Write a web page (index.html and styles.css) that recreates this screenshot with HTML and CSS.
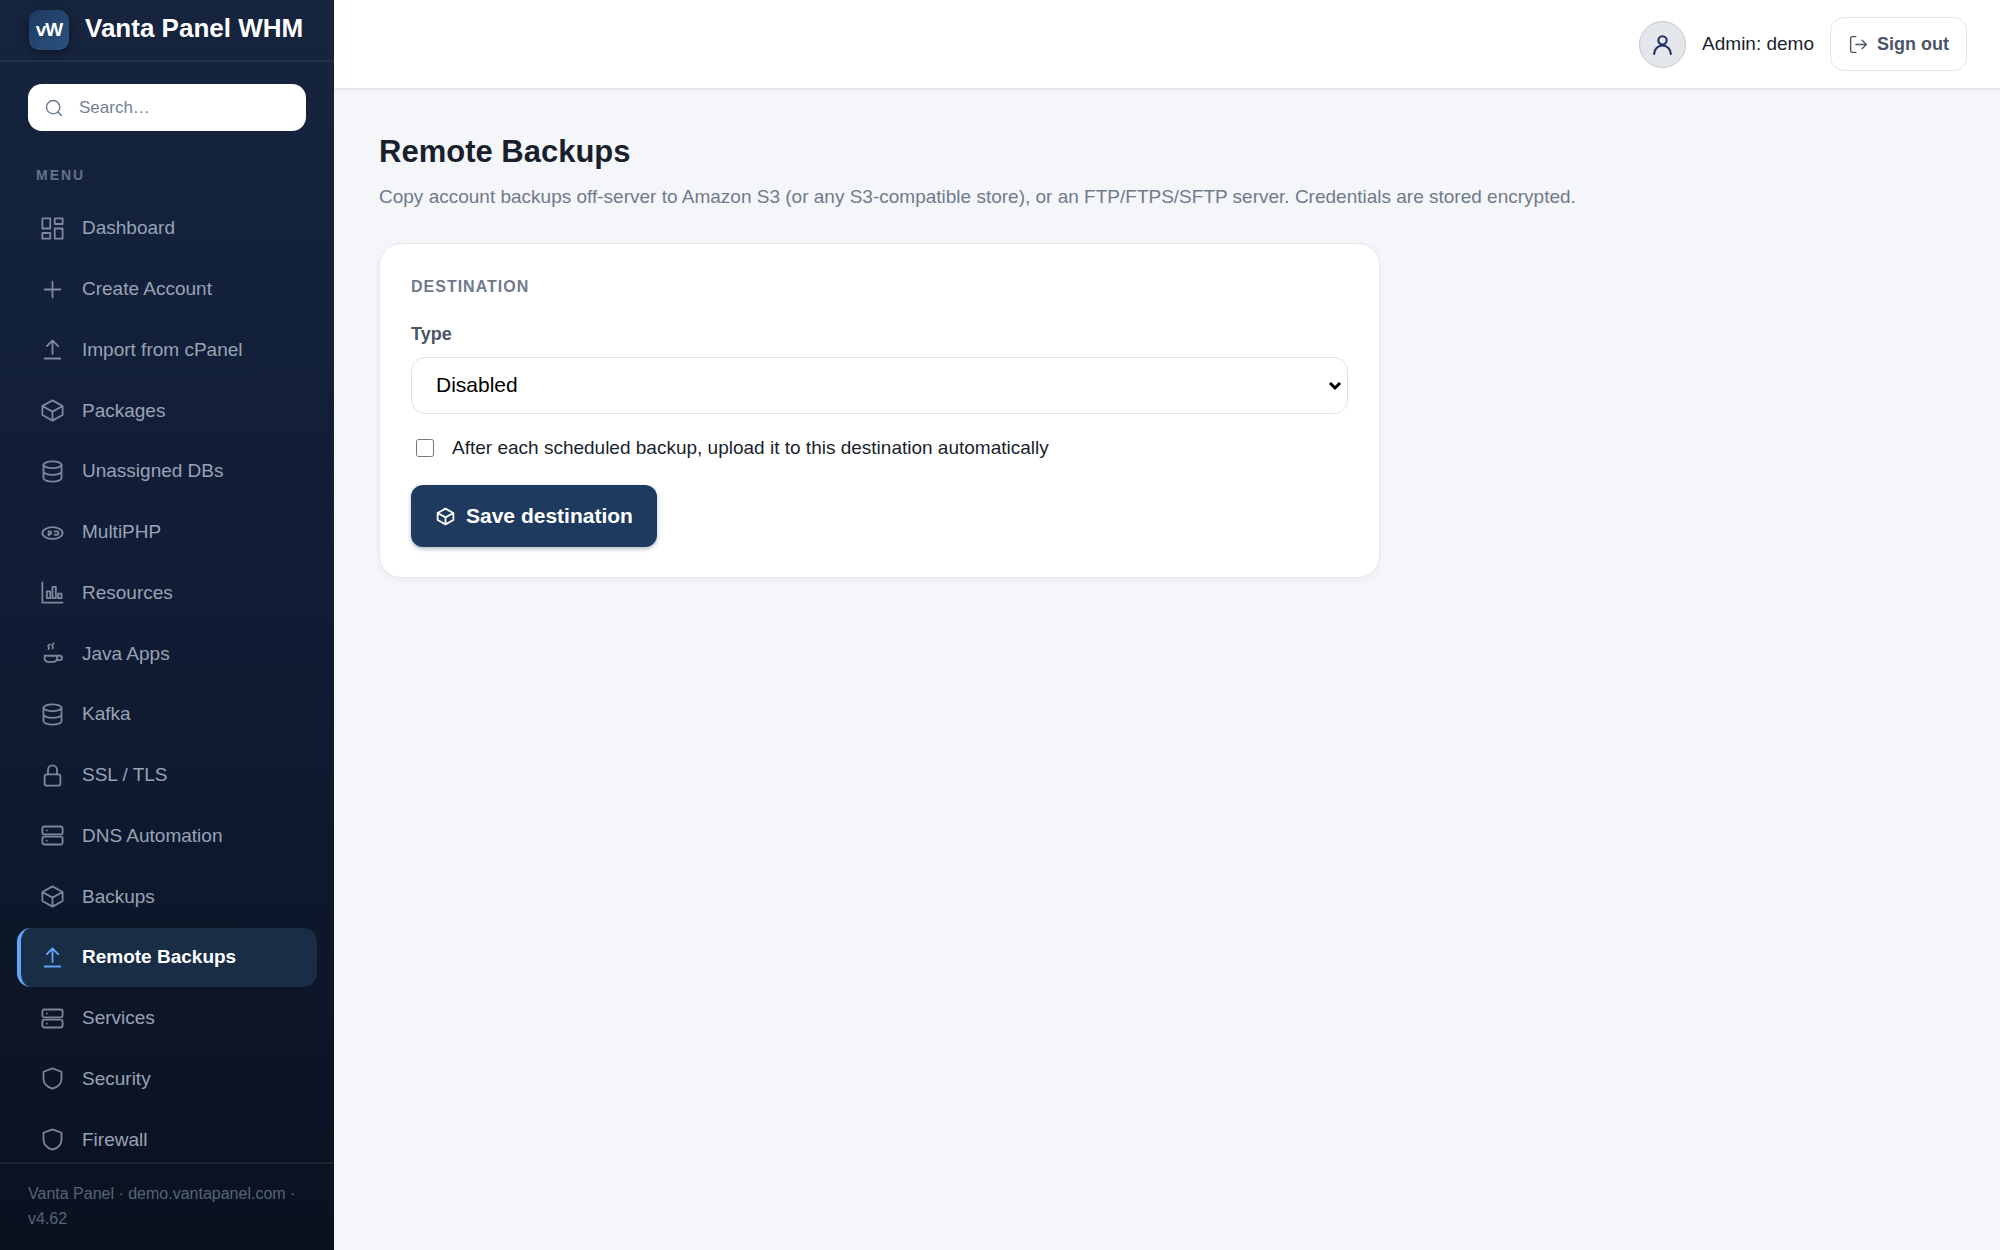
FILE: index.html
```html
<!DOCTYPE html>
<html lang="en">
<head>
    <meta charset="UTF-8">
    <meta name="viewport" content="width=device-width, initial-scale=1.0">
    <title>Remote Backups - Vanta Panel WHM</title>
    <link rel="stylesheet" href="styles.css">
</head>
<body>
    <!-- icon sprite -->
    <svg class="sprite" aria-hidden="true">
        <symbol id="i-search" viewBox="0 0 24 24"><circle cx="11" cy="11" r="8"/><path d="M21 21l-4.3-4.3"/></symbol>
        <symbol id="i-dashboard" viewBox="0 0 24 24"><path d="M3 3h7v9H3zM14 3h7v5h-7zM14 12h7v9h-7zM3 16h7v5H3z"/></symbol>
        <symbol id="i-plus" viewBox="0 0 24 24"><path d="M12 5v14M5 12h14"/></symbol>
        <symbol id="i-upload" viewBox="0 0 24 24"><path d="M12 16V4M7 9l5-5 5 5M5 20h14"/></symbol>
        <symbol id="i-box" viewBox="0 0 24 24"><path d="M12 3l9 5v8l-9 5-9-5V8zM3 8l9 5 9-5M12 13v8"/></symbol>
        <symbol id="i-db" viewBox="0 0 24 24"><ellipse cx="12" cy="6" rx="8" ry="3"/><path d="M4 6v12c0 1.700 3.600 3 8 3s8-1.300 8-3V6M4 12c0 1.700 3.600 3 8 3s8-1.300 8-3"/></symbol>
        <symbol id="i-php" viewBox="0 0 24 24"><ellipse cx="12" cy="12.500" rx="9" ry="5.200"/><path d="M8.500 14.500v-3.500h1a1.400 1.400 0 0 1 0 2.800h-1M13.800 11h2a1.500 1.500 0 0 1 0 3h-2"/></symbol>
        <symbol id="i-chart" viewBox="0 0 24 24"><path d="M3 3v18h18M7 11h3v6H7zM12 7h3v10h-3zM17 13h3v4h-3z"/></symbol>
        <symbol id="i-java" viewBox="0 0 24 24"><path d="M5 14h11v2.500a3 3 0 0 1-3 3H8a3 3 0 0 1-3-3zM16 14h2.500a1.800 1.800 0 0 1 0 3.800H16M9.500 4c-1.500 1-1.500 1.500-1 2.200s.5 1.300 0 1.800M13 3c-1.500 1-1.500 1.700-1 2.500s.5 1.300 0 2"/></symbol>
        <symbol id="i-lock" viewBox="0 0 24 24"><rect x="5" y="11" width="14" height="10" rx="2"/><path d="M8 11V7a4 4 0 0 1 8 0v4"/></symbol>
        <symbol id="i-server" viewBox="0 0 24 24"><rect x="3" y="4" width="18" height="7" rx="2"/><rect x="3" y="13" width="18" height="7" rx="2"/><path d="M7 7.500h.01M7 16.500h.01"/></symbol>
        <symbol id="i-shield" viewBox="0 0 24 24"><path d="M12 3l8 3v6c0 4.500-3.200 7.700-8 9-4.800-1.300-8-4.500-8-9V6z"/></symbol>
        <symbol id="i-user" viewBox="0 0 24 24"><circle cx="12" cy="8" r="4"/><path d="M4 21a8 8 0 0 1 16 0"/></symbol>
        <symbol id="i-logout" viewBox="0 0 24 24"><path d="M9 21H5a2 2 0 0 1-2-2V5a2 2 0 0 1 2-2h4M16 17l5-5-5-5M21 12H9"/></symbol>
    </svg>

    <div class="layout">
        <aside class="sidebar">
            <div class="brand">
                <span class="brand-logo">vW</span>
                <span class="brand-name">Vanta Panel WHM</span>
            </div>

            <div class="search">
                <svg class="icon"><use href="#i-search"/></svg>
                <input type="search" placeholder="Search…" aria-label="Search">
            </div>

            <div class="menu-label">Menu</div>
            <nav class="menu">
                <a href="#"><svg class="icon"><use href="#i-dashboard"/></svg>Dashboard</a>
                <a href="#"><svg class="icon"><use href="#i-plus"/></svg>Create Account</a>
                <a href="#"><svg class="icon"><use href="#i-upload"/></svg>Import from cPanel</a>
                <a href="#"><svg class="icon"><use href="#i-box"/></svg>Packages</a>
                <a href="#"><svg class="icon"><use href="#i-db"/></svg>Unassigned DBs</a>
                <a href="#"><svg class="icon"><use href="#i-php"/></svg>MultiPHP</a>
                <a href="#"><svg class="icon"><use href="#i-chart"/></svg>Resources</a>
                <a href="#"><svg class="icon"><use href="#i-java"/></svg>Java Apps</a>
                <a href="#"><svg class="icon"><use href="#i-db"/></svg>Kafka</a>
                <a href="#"><svg class="icon"><use href="#i-lock"/></svg>SSL / TLS</a>
                <a href="#"><svg class="icon"><use href="#i-server"/></svg>DNS Automation</a>
                <a href="#"><svg class="icon"><use href="#i-box"/></svg>Backups</a>
                <a href="#" class="active" aria-current="page"><svg class="icon"><use href="#i-upload"/></svg>Remote Backups</a>
                <a href="#"><svg class="icon"><use href="#i-server"/></svg>Services</a>
                <a href="#"><svg class="icon"><use href="#i-shield"/></svg>Security</a>
                <a href="#"><svg class="icon"><use href="#i-shield"/></svg>Firewall</a>
            </nav>

            <div class="sidebar-footer">Vanta Panel · demo.vantapanel.com · v4.62</div>
        </aside>

        <div class="main">
            <header class="topbar">
                <span class="avatar"><svg class="icon"><use href="#i-user"/></svg></span>
                <span class="admin-name">Admin: demo</span>
                <button type="button" class="btn-signout"><svg class="icon"><use href="#i-logout"/></svg>Sign out</button>
            </header>

            <main class="content">
                <h1>Remote Backups</h1>
                <p class="subtitle">Copy account backups off-server to Amazon S3 (or any S3-compatible store), or an FTP/FTPS/SFTP server. Credentials are stored encrypted.</p>

                <form class="card">
                    <h2>Destination</h2>
                    <label class="field-label" for="type">Type</label>
                    <select id="type">
                        <option>Disabled</option>
                        <option>Amazon S3 / S3-compatible</option>
                        <option>FTP / FTPS</option>
                        <option>SFTP</option>
                    </select>
                    <label class="check">
                        <input type="checkbox">
                        After each scheduled backup, upload it to this destination automatically
                    </label>
                    <button type="button" class="btn-primary"><svg class="icon"><use href="#i-box"/></svg>Save destination</button>
                </form>
            </main>
        </div>
    </div>
</body>
</html>
```
FILE: styles.css
```css
* {
    box-sizing: border-box;
}
body {
    margin: 0;
    font-family: "Liberation Sans", Arial, sans-serif;
    font-size: 19px;
    color: #1a1f2e;
    background: #f4f6fa;
}
button, input, select {
    font-family: inherit;
}
.sprite {
    display: none;
}
.icon {
    width: 27px;
    height: 27px;
    flex-shrink: 0;
    fill: none;
    stroke: currentColor;
    stroke-width: 1.6;
    stroke-linecap: round;
    stroke-linejoin: round;
}
.layout {
    display: flex;
    height: 100vh;
}

/* sidebar */
.sidebar {
    width: 334px;
    flex-shrink: 0;
    display: flex;
    flex-direction: column;
    background: linear-gradient(180deg, #16243e 0%, #111d36 45%, #0a1220 100%);
}
.brand {
    display: flex;
    align-items: center;
    gap: 16px;
    padding: 10px 29px;
    border-bottom: 2px solid #22304a;
}
.brand-logo {
    width: 40px;
    height: 40px;
    border-radius: 10px;
    background: linear-gradient(135deg, #1e3a5f, #2c5282);
    box-shadow: 0 3px 10px rgba(0, 0, 0, 0.35);
    color: #fff;
    font-size: 19px;
    font-weight: bold;
    line-height: 40px;
    text-align: center;
    letter-spacing: -1px;
}
.brand-name {
    padding-bottom: 4px;
    color: #fff;
    font-size: 26px;
    font-weight: bold;
    line-height: 36px;
    white-space: nowrap;
}
.search {
    display: flex;
    align-items: center;
    gap: 15px;
    height: 47px;
    margin: 22px 28px 0;
    padding: 0 16px;
    border-radius: 14px;
    background: #fff;
    color: #64748b;
}
.search .icon {
    width: 20px;
    height: 20px;
}
.search input {
    flex: 1;
    min-width: 0;
    padding: 0;
    border: 0;
    outline: none;
    background: none;
    font-size: 17px;
}
.search input::placeholder {
    color: #718096;
}
.menu-label {
    margin: 34px 36px 0;
    color: #64718a;
    font-size: 14px;
    font-weight: bold;
    line-height: 20px;
    letter-spacing: 2px;
    text-transform: uppercase;
}
.menu {
    flex: 1;
    min-height: 0;
    display: flex;
    flex-direction: column;
    gap: 2px;
    margin: 14px 17px -7px;
}
.menu a {
    flex: 1;
    display: flex;
    align-items: center;
    gap: 16px;
    padding-left: 18px;
    border-left: 4px solid transparent;
    border-radius: 14px;
    color: #98a3b5;
    font-size: 19px;
    text-decoration: none;
}
.menu .icon {
    opacity: 0.8;
}
.menu a.active {
    border-left-color: #60a5fa;
    background: #1a2d47;
    color: #fff;
    font-weight: bold;
}
.menu .active .icon {
    color: #60a5fa;
    opacity: 1;
}
.sidebar-footer {
    padding: 17px 28px 19px;
    border-top: 2px solid #1a2433;
    color: #576476;
    font-size: 16px;
    line-height: 25px;
}

/* top bar */
.main {
    flex: 1;
    min-width: 0;
}
.topbar {
    display: flex;
    align-items: center;
    justify-content: flex-end;
    gap: 16px;
    height: 89px;
    padding: 0 33px;
    background: #fff;
    border-bottom: 1px solid #e2e5ea;
    box-shadow: 0 1px 3px rgba(15, 23, 42, 0.06);
}
.avatar {
    display: flex;
    align-items: center;
    justify-content: center;
    width: 47px;
    height: 47px;
    border: 1px solid #c3c9d1;
    border-radius: 50%;
    background: #e3e7eb;
    color: #1e2f63;
}
.avatar .icon {
    width: 25px;
    height: 25px;
    stroke-width: 2;
}
.btn-signout {
    display: flex;
    align-items: center;
    gap: 8px;
    height: 54px;
    padding: 0 17px;
    border: 1px solid #e2e5ea;
    border-radius: 14px;
    background: #fff;
    color: #4a5568;
    font-size: 18px;
    font-weight: bold;
}
.btn-signout .icon {
    width: 21px;
    height: 21px;
}

/* page content */
.content {
    padding: 43px 45px;
}
h1 {
    margin: 0;
    font-size: 31px;
    line-height: 40px;
}
.subtitle {
    margin: 12px 0 33px;
    color: #717a8a;
    line-height: 26px;
}
.card {
    max-width: 1001px;
    padding: 30px 31px;
    border: 1px solid #e6e8ec;
    border-radius: 22px;
    background: #fff;
    box-shadow: 0 2px 6px rgba(15, 23, 42, 0.04);
}
.card h2 {
    margin: 0 0 22px;
    color: #717a8c;
    font-size: 16px;
    line-height: 26px;
    letter-spacing: 1px;
    text-transform: uppercase;
}
.field-label {
    display: block;
    margin-bottom: 11px;
    color: #4a5568;
    font-size: 18px;
    font-weight: bold;
    line-height: 24px;
}
select {
    appearance: none;
    display: block;
    width: 100%;
    height: 57px;
    padding: 0 32px 2px 24px;
    border: 1px solid #e2e4e7;
    border-radius: 14px;
    background: #fff url("data:image/svg+xml,%3Csvg xmlns='http://www.w3.org/2000/svg' width='14' height='10'%3E%3Cpath d='M2 2l5 5 5-5' fill='none' stroke='%23000' stroke-width='3'/%3E%3C/svg%3E") no-repeat right 5px center;
    color: #000;
    font-size: 21px;
}
.check {
    display: flex;
    align-items: center;
    gap: 18px;
    margin: 21px 0 24px;
    line-height: 26px;
}
.check input {
    width: 18px;
    height: 18px;
    margin: 0 0 0 5px;
}
.btn-primary {
    display: flex;
    align-items: center;
    gap: 10px;
    height: 62px;
    padding: 0 24px;
    border: 0;
    border-radius: 12px;
    background: #1e3a5f;
    box-shadow: 0 2px 4px rgba(30, 58, 95, 0.35);
    color: #fff;
    font-size: 21px;
    font-weight: bold;
}
.btn-primary .icon {
    width: 21px;
    height: 21px;
    stroke-width: 2;
}
```
